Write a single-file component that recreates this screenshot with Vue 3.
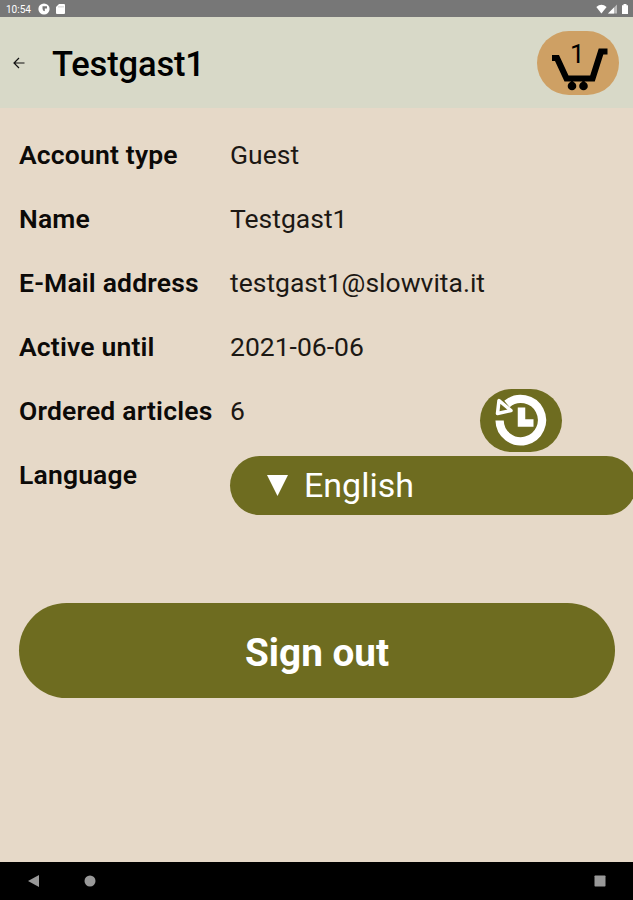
<script setup>
const rows = [
  { label: 'Account type', value: 'Guest' },
  { label: 'Name', value: 'Testgast1' },
  { label: 'E-Mail address', value: 'testgast1@slowvita.it' },
  { label: 'Active until', value: '2021-06-06' },
  { label: 'Ordered articles', value: '6', history: true },
]
</script>

<template>
  <div class="screen">
    <div class="status">
      <span class="time">10:54</span>
      <svg class="app-dot" width="12" height="12" viewBox="0 0 12 12">
        <circle cx="6" cy="6" r="5.600" fill="#fff" />
        <path d="M4.500 3.200H9v2.300H6.800v2.800A2.600 2.600 0 0 1 4.500 5.600z" fill="#777" />
      </svg>
      <svg class="sd" width="9" height="10" viewBox="0 0 9 10">
        <path d="M3 0h5a1 1 0 0 1 1 1v8a1 1 0 0 1-1 1H1a1 1 0 0 1-1-1V3z" fill="#fff" />
        <path d="M3 2v1.600M5 2v1.600M7 2v1.600" stroke="#aaa" stroke-width=".7" />
      </svg>
      <svg class="signals" width="34" height="11" viewBox="0 0 34 11">
        <path d="M.3 3Q5.400-1.300 10.600 3L5.400 9.500z" fill="#fff" />
        <path d="M12 9.500L21 .5v9z" fill="#bbb" />
        <path d="M12 9.500L18 3.500v6z" fill="#fff" />
        <path d="M26 1.200h1.500V0h3v1.200H32v8.800h-6z" fill="#fff" />
      </svg>
    </div>

    <header class="header">
      <svg class="back" width="12" height="12" viewBox="0 0 12 12">
        <path d="M11.500 6H1.200M6 1L1 6l5 5" fill="none" stroke="#111" stroke-width="1.200" />
      </svg>
      <h1>Testgast1</h1>
      <button class="cart">
        <svg width="82" height="64" viewBox="0 0 82 64">
          <path d="M15 27H20L29.500 47.500H55.500L64 20.500H70.500" fill="none" stroke="#000" stroke-width="6.200" />
          <circle cx="35" cy="55" r="4.300" />
          <circle cx="46.500" cy="55" r="4.300" />
          <path d="M35 50v5M46.500 50v5" stroke="#000" stroke-width="2.500" />
        </svg>
        <span class="count">1</span>
      </button>
    </header>

    <main>
      <div v-for="row in rows" :key="row.label" class="row">
        <span class="label">{{ row.label }}</span>
        <span class="value">{{ row.value }}</span>
        <button v-if="row.history" class="history">
          <svg width="82" height="63" viewBox="0 0 82 63">
            <path d="M19.600 31.500A21.200 21.200 0 1 0 27 15" fill="none" stroke="#fff" stroke-width="8.300" />
            <path d="M19 11.500L17.500 24.500L31 21.500z" fill="#6e6c20" stroke="#fff" stroke-width="3.500" stroke-linejoin="round" />
            <path d="M41.500 18.500v15.500h12" fill="none" stroke="#fff" stroke-width="7.500" />
          </svg>
        </button>
      </div>
      <div class="row">
        <span class="label">Language</span>
        <button class="select">
          <svg width="21" height="21" viewBox="0 0 21 21">
            <path d="M0 0h21L10.500 21z" fill="#fff" />
          </svg>
          <span>English</span>
        </button>
      </div>
      <button class="signout">Sign out</button>
    </main>

    <nav class="nav">
      <svg width="12" height="12" viewBox="0 0 12 12"><path d="M11 0v12L0 6z" fill="#999" /></svg>
      <svg width="12" height="12" viewBox="0 0 12 12"><circle cx="6" cy="6" r="5.500" fill="#999" /></svg>
      <svg class="recent" width="12" height="12" viewBox="0 0 12 12"><rect x=".5" y=".5" width="11" height="11" rx=".7" fill="#999" /></svg>
    </nav>
  </div>
</template>

<style>
body {
  background: #e6d9c8;
  overflow: hidden;
}
</style>

<style scoped>
.screen {
  width: 633px;
  height: 900px;
  overflow: hidden;
  display: flex;
  flex-direction: column;
  background: #e6d9c8;
  color: #0c0a08;
  font-family: Roboto, "Liberation Sans", sans-serif;
}
.screen svg {
  display: block;
  flex: none;
}
button {
  border: 0;
  padding: 0;
  font-family: inherit;
  color: #fff;
  background: #6e6c20;
}
.status {
  flex: none;
  height: 17px;
  box-sizing: border-box;
  padding: 1px 3px 0 6px;
  display: flex;
  align-items: center;
  background: #777;
  color: #fff;
}
.time {
  width: 32px;
  font-size: 10px;
}
.sd {
  margin-left: 6px;
}
.signals {
  margin-left: auto;
}
.header {
  flex: none;
  height: 91px;
  box-sizing: border-box;
  padding: 0 14px 0 13px;
  display: flex;
  align-items: center;
  background: #d8d9c8;
}
h1 {
  margin: 2px 0 0 27px;
  font-size: 34.500px;
  line-height: 42px;
  font-weight: 500;
  letter-spacing: -0.150px;
  color: #000;
}
.cart {
  position: relative;
  width: 82px;
  height: 64px;
  margin-left: auto;
  border-radius: 32px;
  background: #cea064;
}
.count {
  position: absolute;
  left: 33px;
  top: 7px;
  font-size: 26px;
  line-height: 32px;
  color: #000;
}
main {
  flex: 1;
  padding: 15px 0 0 19px;
}
.row {
  height: 64px;
  display: flex;
  align-items: center;
}
.label {
  flex: none;
  width: 211px;
  font-size: 26.500px;
  line-height: 30px;
  font-weight: 600;
  letter-spacing: 0.180px;
}
.value {
  flex: none;
  width: 250px;
  font-size: 26.500px;
  line-height: 30px;
  color: #1c1814;
}
.history {
  width: 82px;
  height: 63px;
  margin-top: 18px;
  border-radius: 32px;
}
.select {
  flex: none;
  width: 406px;
  height: 59px;
  margin-top: 20px;
  padding-left: 37px;
  border-radius: 30px;
  display: flex;
  align-items: center;
  gap: 16px;
  font-size: 34px;
}
.signout {
  display: block;
  width: 596px;
  height: 95px;
  margin-top: 96px;
  padding-top: 4px;
  border-radius: 48px;
  font-size: 38.700px;
  font-weight: 700;
}
.nav {
  flex: none;
  height: 38px;
  box-sizing: border-box;
  padding: 0 27px 0 28px;
  display: flex;
  align-items: center;
  gap: 44px;
  background: #000;
}
.recent {
  margin-left: auto;
}
</style>
